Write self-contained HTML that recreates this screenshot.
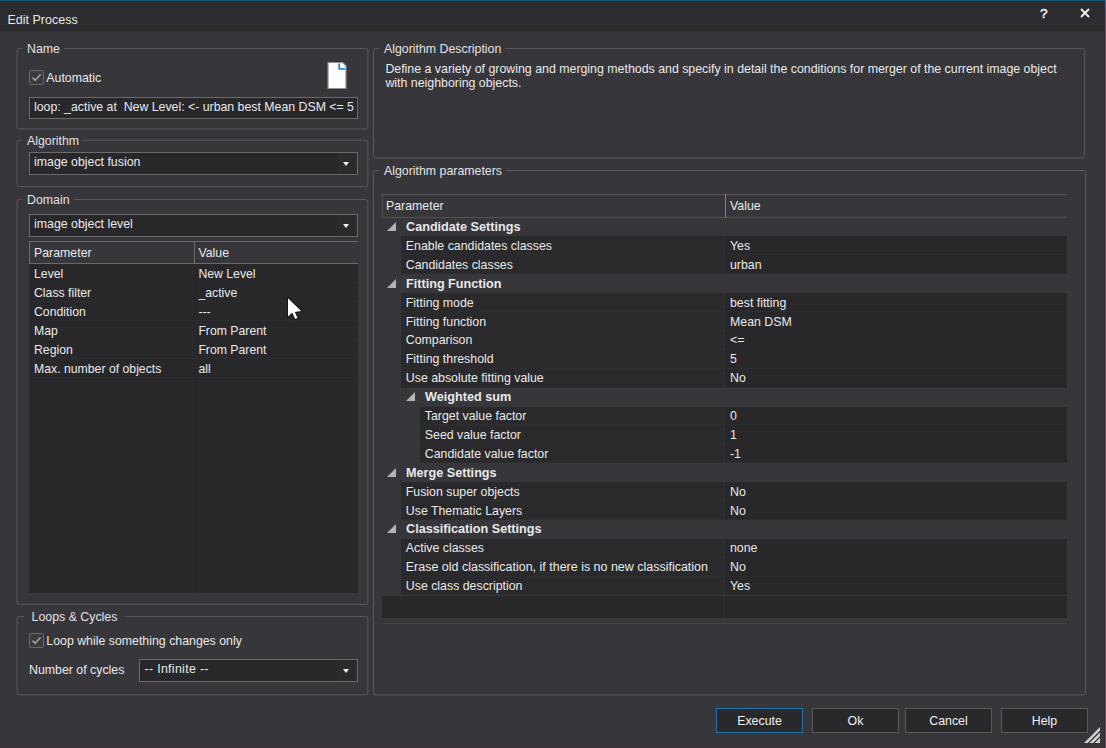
<!DOCTYPE html>
<html>
<head>
<meta charset="utf-8">
<title>Edit Process</title>
<style>
html,body{margin:0;padding:0;}
body{width:1106px;height:748px;overflow:hidden;background:#37363b;position:relative;
 font-family:"Liberation Sans",sans-serif;font-size:12.35px;color:#e9e9e9;}
.abs{position:absolute;}
#topline{left:0;top:0;width:1106px;height:1px;background:#1c5679;}
#titlebar{left:0;top:1px;width:1106px;height:30px;background:#2d2d30;}
#title{left:7.5px;top:12.4px;font-size:12.5px;line-height:16px;color:#e6e6e6;white-space:pre;}
.gb{position:absolute;border:1px solid #535356;border-radius:3px;box-sizing:border-box;}
.gbt{position:absolute;background:#37363b;padding:0 4px 0 5px;line-height:14px;white-space:pre;color:#e2e2e2;}
.t{position:absolute;white-space:pre;line-height:14px;}
.cb{position:absolute;width:15px;height:15px;box-sizing:border-box;border:1px solid #68686c;border-radius:2px;background:#3b3b3f;}
.field{position:absolute;box-sizing:border-box;border:1px solid #6b6b6e;background:#28282b;}
.field .t{left:4px;}
.arrow{position:absolute;width:0;height:0;border-left:3px solid transparent;border-right:3px solid transparent;border-top:4px solid #f4f4f4;}
.ddb{position:absolute;top:0;width:20px;background:#2b2b2e;}
.btn{position:absolute;box-sizing:border-box;border:1px solid #5a5a5d;background:#29292b;text-align:center;line-height:24px;height:25px;top:708px;color:#f0f0f0;}
.row{position:absolute;background:#28282b;border-bottom:1px solid #2d2d30;box-sizing:border-box;}
.b{font-weight:bold;font-size:12.65px;}
</style>
</head>
<body>
<div id="topline" class="abs"></div><div id="titlebar" class="abs"></div>
<div id="title" class="abs">Edit Process</div>
<div class="t" style="left:1040px;top:6.5px;font-size:13.6px;-webkit-text-stroke:0.4px #f4f4f4;color:#f4f4f4;">?</div>
<svg class="abs" style="left:1080px;top:8.3px" width="10" height="10" viewBox="0 0 10 10"><path d="M1 1 L9 9 M9 1 L1 9" stroke="#f4f4f4" stroke-width="1.8" fill="none"/></svg>
<div class="abs" style="left:0;top:31px;width:1106px;height:1px;background:#323135;"></div>
<div class="abs" style="left:1104px;top:1px;width:1px;height:747px;background:#3b2e33;"></div>
<div class="abs" style="left:1105px;top:0;width:1px;height:748px;background:#386a8c;"></div>
<div class="abs" style="left:0;top:747px;width:1104px;height:1px;background:#3a3338;"></div>
<svg class="abs" style="left:0;top:0" width="1106" height="748" fill="none" stroke="#5a5a5f" stroke-width="1"><rect x="17" y="48.5" width="350.9" height="80.4" rx="2.5"/><rect x="17" y="140.2" width="350.9" height="46.4" rx="2.5"/><rect x="17" y="199.5" width="350.9" height="404.9" rx="2.5"/><rect x="17" y="616.5" width="350.9" height="78.3" rx="2.5"/><rect x="373.4" y="48.5" width="711.2" height="109.5" rx="2.5"/><rect x="373.4" y="170.5" width="712.2" height="524.4" rx="2.5"/></svg>
<div class="gbt" style="left:22px;top:42px;">Name</div>
<div class="cb" style="left:29px;top:70px;"><svg width="13" height="13" viewBox="0 0 13 13" style="position:absolute;left:0;top:0"><path d="M2.6 6.6 L5.2 9.4 L10.6 3.2" stroke="#a0a0a3" stroke-width="1.6" fill="none"/></svg></div>
<div class="t" style="left:46.3px;top:70.5px;">Automatic</div>
<svg class="abs" style="left:327px;top:61.3px" width="20" height="29" viewBox="0 0 20 29"><path d="M1 1.5 H15.8 L19 4.7 V27.5 H1 Z" fill="#fdfdfd" stroke="#8e8e90" stroke-width="1.2"/><path d="M12.2 2.5 V7.8 H18" fill="none" stroke="#1f8ad8" stroke-width="1.8"/></svg>
<div class="field" style="left:29px;top:97px;width:329px;height:22px;"><div class="t" style="top:1.8px;font-size:12.32px;">loop: _active at  New Level: &lt;- urban best Mean DSM &lt;= 5</div></div>
<div class="gbt" style="left:22px;top:134px;">Algorithm</div>
<div class="field" style="left:29px;top:152px;width:329px;height:23px;"><div class="t" style="top:2px;">image object fusion</div><div class="ddb" style="left:307px;height:21px;"></div><div class="arrow" style="left:313px;top:8.8px;"></div></div>
<div class="gbt" style="left:22px;top:193px;">Domain</div>
<div class="field" style="left:29px;top:214px;width:329px;height:23px;"><div class="t" style="top:2px;">image object level</div><div class="ddb" style="left:307px;height:21px;"></div><div class="arrow" style="left:313px;top:8.6px;"></div></div>
<div class="abs" style="left:29px;top:241px;width:329px;height:352px;background:#28282b;"></div>
<div class="abs" style="left:29px;top:241px;width:329px;height:23px;box-sizing:border-box;background:#37363b;border:1px solid #6a6a6d;border-right:none;"></div>
<div class="abs" style="left:194px;top:241px;width:1px;height:23px;background:#6a6a6d;"></div>
<div class="t" style="left:34px;top:246px;">Parameter</div>
<div class="t" style="left:198.4px;top:246px;">Value</div>
<div class="row" style="left:29px;top:264px;width:329px;height:19px;"></div>
<div class="t" style="left:34px;top:267px;font-size:12.25px;">Level</div>
<div class="t" style="left:198.4px;top:267px;font-size:12.25px;">New Level</div>
<div class="row" style="left:29px;top:283px;width:329px;height:19px;"></div>
<div class="t" style="left:34px;top:286px;font-size:12.25px;">Class filter</div>
<div class="t" style="left:198.4px;top:286px;font-size:12.25px;">_active</div>
<div class="row" style="left:29px;top:302px;width:329px;height:19px;"></div>
<div class="t" style="left:34px;top:305px;font-size:12.25px;">Condition</div>
<div class="t" style="left:198.4px;top:305px;font-size:12.25px;">---</div>
<div class="row" style="left:29px;top:321px;width:329px;height:19px;"></div>
<div class="t" style="left:34px;top:324px;font-size:12.25px;">Map</div>
<div class="t" style="left:198.4px;top:324px;font-size:12.25px;">From Parent</div>
<div class="row" style="left:29px;top:340px;width:329px;height:19px;"></div>
<div class="t" style="left:34px;top:343px;font-size:12.25px;">Region</div>
<div class="t" style="left:198.4px;top:343px;font-size:12.25px;">From Parent</div>
<div class="row" style="left:29px;top:359px;width:329px;height:19px;"></div>
<div class="t" style="left:34px;top:362px;font-size:12.25px;">Max. number of objects</div>
<div class="t" style="left:198.4px;top:362px;font-size:12.25px;">all</div>
<div class="abs" style="left:192px;top:264px;width:1px;height:329px;background:#2b2b2e;"></div>
<svg class="abs" style="left:280px;top:292px" width="30" height="32" viewBox="0 0 30 32"><path d="M8 6.2 L8 24.4 L12.3 20.7 L15.2 27.1 L17.5 26.1 L14.8 19.9 L21.2 18.9 Z" fill="#ffffff" stroke="#161618" stroke-width="2" stroke-linejoin="round" paint-order="stroke"/></svg>
<div class="gbt" style="left:24px;top:609.5px;padding:0 8px 0 7.6px;">Loops &amp; Cycles</div>
<div class="cb" style="left:29px;top:633px;"><svg width="13" height="13" viewBox="0 0 13 13" style="position:absolute;left:0;top:0"><path d="M2.6 6.6 L5.2 9.4 L10.6 3.2" stroke="#a0a0a3" stroke-width="1.6" fill="none"/></svg></div>
<div class="t" style="left:46.3px;top:634.3px;">Loop while something changes only</div>
<div class="t" style="left:29px;top:663px;">Number of cycles</div>
<div class="field" style="left:139px;top:659px;width:219px;height:23px;"><div class="t" style="top:2px;left:4.5px;letter-spacing:0.33px;">-- Infinite --</div><div class="ddb" style="left:197px;height:21px;"></div><div class="arrow" style="left:203px;top:8.7px;"></div></div>
<div class="gbt" style="left:379px;top:42px;">Algorithm Description</div>
<div class="t" style="left:385.4px;top:62px;line-height:14.4px;font-size:12.37px;">Define a variety of growing and merging methods and specify in detail the conditions for merger of the current image object
with neighboring objects.</div>
<div class="gbt" style="left:379px;top:164px;">Algorithm parameters</div>
<div class="abs" style="left:382px;top:194px;width:685px;height:24px;box-sizing:border-box;border:1px solid #535357;border-right:none;border-radius:2px 0 0 2px;"></div>
<div class="abs" style="left:725px;top:194px;width:1px;height:24px;background:#808083;"></div>
<div class="t" style="left:386px;top:199px;">Parameter</div>
<div class="t" style="left:730px;top:199px;">Value</div>
<svg class="abs" style="left:387px;top:222px" width="9" height="9" viewBox="0 0 9 9"><path d="M0 9 H9 V0 Z" fill="#b4b4b6"/></svg>
<div class="t b" style="left:406px;top:220px;">Candidate Settings</div>
<div class="row" style="left:401px;top:236.4px;width:323px;height:18.9px;background:#2a2a2d;"></div>
<div class="row" style="left:724px;top:236.4px;width:343px;height:18.9px;border-left:1px solid #303033;"></div>
<div class="t" style="left:405.8px;top:238.9px;">Enable candidates classes</div>
<div class="t" style="left:730px;top:238.9px;">Yes</div>
<div class="row" style="left:401px;top:255.3px;width:323px;height:18.9px;background:#2a2a2d;"></div>
<div class="row" style="left:724px;top:255.3px;width:343px;height:18.9px;border-left:1px solid #303033;"></div>
<div class="t" style="left:405.8px;top:257.8px;">Candidates classes</div>
<div class="t" style="left:730px;top:257.8px;">urban</div>
<svg class="abs" style="left:387px;top:278.7px" width="9" height="9" viewBox="0 0 9 9"><path d="M0 9 H9 V0 Z" fill="#b4b4b6"/></svg>
<div class="t b" style="left:406px;top:276.7px;">Fitting Function</div>
<div class="row" style="left:401px;top:293.1px;width:323px;height:18.9px;background:#2a2a2d;"></div>
<div class="row" style="left:724px;top:293.1px;width:343px;height:18.9px;border-left:1px solid #303033;"></div>
<div class="t" style="left:405.8px;top:295.6px;">Fitting mode</div>
<div class="t" style="left:730px;top:295.6px;">best fitting</div>
<div class="row" style="left:401px;top:312px;width:323px;height:18.9px;background:#2a2a2d;"></div>
<div class="row" style="left:724px;top:312px;width:343px;height:18.9px;border-left:1px solid #303033;"></div>
<div class="t" style="left:405.8px;top:314.5px;">Fitting function</div>
<div class="t" style="left:730px;top:314.5px;">Mean DSM</div>
<div class="row" style="left:401px;top:330.9px;width:323px;height:18.9px;background:#2a2a2d;"></div>
<div class="row" style="left:724px;top:330.9px;width:343px;height:18.9px;border-left:1px solid #303033;"></div>
<div class="t" style="left:405.8px;top:333.4px;">Comparison</div>
<div class="t" style="left:730px;top:333.4px;">&lt;=</div>
<div class="row" style="left:401px;top:349.8px;width:323px;height:18.9px;background:#2a2a2d;"></div>
<div class="row" style="left:724px;top:349.8px;width:343px;height:18.9px;border-left:1px solid #303033;"></div>
<div class="t" style="left:405.8px;top:352.3px;">Fitting threshold</div>
<div class="t" style="left:730px;top:352.3px;">5</div>
<div class="row" style="left:401px;top:368.7px;width:323px;height:18.9px;background:#2a2a2d;"></div>
<div class="row" style="left:724px;top:368.7px;width:343px;height:18.9px;border-left:1px solid #303033;"></div>
<div class="t" style="left:405.8px;top:371.2px;">Use absolute fitting value</div>
<div class="t" style="left:730px;top:371.2px;">No</div>
<svg class="abs" style="left:406px;top:392.1px" width="9" height="9" viewBox="0 0 9 9"><path d="M0 9 H9 V0 Z" fill="#b4b4b6"/></svg>
<div class="t b" style="left:425px;top:390.1px;">Weighted sum</div>
<div class="row" style="left:420px;top:406.5px;width:304px;height:18.9px;background:#2a2a2d;"></div>
<div class="row" style="left:724px;top:406.5px;width:343px;height:18.9px;border-left:1px solid #303033;"></div>
<div class="t" style="left:424.8px;top:409px;">Target value factor</div>
<div class="t" style="left:730px;top:409px;">0</div>
<div class="row" style="left:420px;top:425.4px;width:304px;height:18.9px;background:#2a2a2d;"></div>
<div class="row" style="left:724px;top:425.4px;width:343px;height:18.9px;border-left:1px solid #303033;"></div>
<div class="t" style="left:424.8px;top:427.9px;">Seed value factor</div>
<div class="t" style="left:730px;top:427.9px;">1</div>
<div class="row" style="left:420px;top:444.3px;width:304px;height:18.9px;background:#2a2a2d;"></div>
<div class="row" style="left:724px;top:444.3px;width:343px;height:18.9px;border-left:1px solid #303033;"></div>
<div class="t" style="left:424.8px;top:446.8px;">Candidate value factor</div>
<div class="t" style="left:730px;top:446.8px;">-1</div>
<svg class="abs" style="left:387px;top:467.7px" width="9" height="9" viewBox="0 0 9 9"><path d="M0 9 H9 V0 Z" fill="#b4b4b6"/></svg>
<div class="t b" style="left:406px;top:465.7px;">Merge Settings</div>
<div class="row" style="left:401px;top:482.1px;width:323px;height:18.9px;background:#2a2a2d;"></div>
<div class="row" style="left:724px;top:482.1px;width:343px;height:18.9px;border-left:1px solid #303033;"></div>
<div class="t" style="left:405.8px;top:484.6px;">Fusion super objects</div>
<div class="t" style="left:730px;top:484.6px;">No</div>
<div class="row" style="left:401px;top:501px;width:323px;height:18.9px;background:#2a2a2d;"></div>
<div class="row" style="left:724px;top:501px;width:343px;height:18.9px;border-left:1px solid #303033;"></div>
<div class="t" style="left:405.8px;top:503.5px;">Use Thematic Layers</div>
<div class="t" style="left:730px;top:503.5px;">No</div>
<svg class="abs" style="left:387px;top:524.4px" width="9" height="9" viewBox="0 0 9 9"><path d="M0 9 H9 V0 Z" fill="#b4b4b6"/></svg>
<div class="t b" style="left:406px;top:522.4px;">Classification Settings</div>
<div class="row" style="left:401px;top:538.8px;width:323px;height:18.9px;background:#2a2a2d;"></div>
<div class="row" style="left:724px;top:538.8px;width:343px;height:18.9px;border-left:1px solid #303033;"></div>
<div class="t" style="left:405.8px;top:541.3px;">Active classes</div>
<div class="t" style="left:730px;top:541.3px;">none</div>
<div class="row" style="left:401px;top:557.7px;width:323px;height:18.9px;background:#2a2a2d;"></div>
<div class="row" style="left:724px;top:557.7px;width:343px;height:18.9px;border-left:1px solid #303033;"></div>
<div class="t" style="left:405.8px;top:560.2px;font-size:12.47px;">Erase old classification, if there is no new classification</div>
<div class="t" style="left:730px;top:560.2px;">No</div>
<div class="row" style="left:401px;top:576.6px;width:323px;height:18.9px;background:#2a2a2d;"></div>
<div class="row" style="left:724px;top:576.6px;width:343px;height:18.9px;border-left:1px solid #303033;"></div>
<div class="t" style="left:405.8px;top:579.1px;">Use class description</div>
<div class="t" style="left:730px;top:579.1px;">Yes</div>
<div class="abs" style="left:382px;top:595.5px;width:685px;height:22.5px;background:#28282b;"></div>
<div class="abs" style="left:724px;top:595.5px;width:1px;height:22.5px;background:#303033;"></div>
<div class="abs" style="left:382px;top:623px;width:685px;height:1px;background:#434347;"></div>
<div class="btn" style="left:716px;width:87px;border-color:#2273ab;">Execute</div>
<div class="btn" style="left:812px;width:87px;">Ok</div>
<div class="btn" style="left:905px;width:87px;">Cancel</div>
<div class="btn" style="left:1001px;width:87px;">Help</div>
<svg class="abs" style="left:1083.5px;top:727px" width="16" height="16" viewBox="0 0 16 16"><path d="M0 16 L16 0 V3.6 L3.6 16 Z M5.4 16 L16 5.4 V9 L9 16 Z M10.8 16 L16 10.8 V16 Z" fill="#d2d2d4"/></svg>
</body>
</html>
